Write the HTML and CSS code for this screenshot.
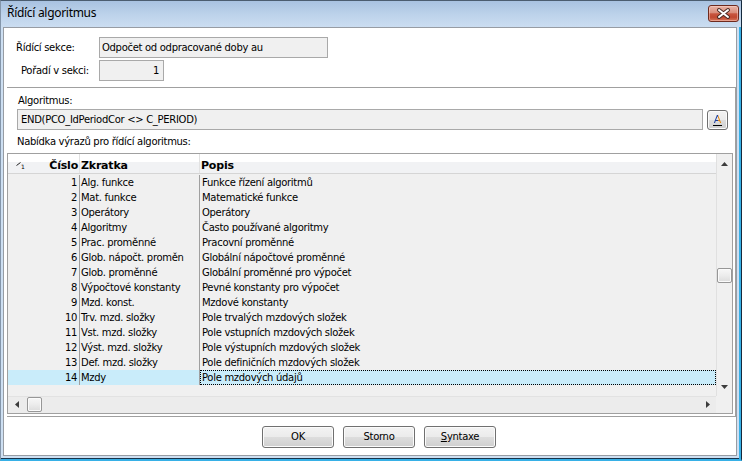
FILE: index.html
```html
<!DOCTYPE html>
<html lang="cs">
<head>
<meta charset="utf-8">
<title>Řídící algoritmus</title>
<link rel="stylesheet" href="styles.css">
</head>
<body>
<div class="window">
  <div class="titlebar">
    <span class="title">Řídící algoritmus</span>
    <button class="close" aria-label="Zavřít">
      <svg width="29" height="15" viewBox="0 0 29 15">
        <path d="M10 4 L19 11 M19 4 L10 11" stroke="#4a2a24" stroke-width="4" stroke-linecap="round" fill="none"/>
        <path d="M10 4 L19 11 M19 4 L10 11" stroke="#ffffff" stroke-width="2" stroke-linecap="round" fill="none"/>
      </svg>
    </button>
  </div>
  <div class="client">
    <div class="form-top">
      <div class="frow r1"><span class="lbl">Řídící sekce:</span><div class="field f-sekce">Odpočet od odpracované doby au</div></div>
      <div class="frow r2"><span class="lbl">Pořadí v sekci:</span><div class="field f-poradi">1</div></div>
    </div>
    <div class="panel">
      <div class="cap cap-alg">Algoritmus:</div>
      <div class="alg-row">
        <div class="field f-alg">END(PCO_IdPeriodCor &lt;&gt; C_PERIOD)</div>
        <button class="abtn"><span class="a-glyph">A</span></button>
      </div>
      <div class="cap cap-nab">Nabídka výrazů pro řídící algoritmus:</div>
      <div class="grid">
        <div class="gmain">
          <div class="ghead">
            <div class="hc h1"><span class="sort"><svg width="5" height="4" viewBox="0 0 5 4"><path d="M0.5 3.5 L4.5 0.5" stroke="#222" stroke-width="1" fill="none"/></svg><span class="sort-n">1</span></span><span class="htxt">Číslo</span></div>
            <div class="hc h2">Zkratka</div>
            <div class="hc h3">Popis</div>
          </div>
          <div class="gbody">
            <div class="row"><div class="c c1">1</div><div class="c c2">Alg. funkce</div><div class="c c3">Funkce řízení algoritmů</div></div>
            <div class="row"><div class="c c1">2</div><div class="c c2">Mat. funkce</div><div class="c c3">Matematické funkce</div></div>
            <div class="row"><div class="c c1">3</div><div class="c c2">Operátory</div><div class="c c3">Operátory</div></div>
            <div class="row"><div class="c c1">4</div><div class="c c2">Algoritmy</div><div class="c c3">Často používané algoritmy</div></div>
            <div class="row"><div class="c c1">5</div><div class="c c2">Prac. proměnné</div><div class="c c3">Pracovní proměnné</div></div>
            <div class="row"><div class="c c1">6</div><div class="c c2">Glob. nápočt. proměn</div><div class="c c3">Globální nápočtové proměnné</div></div>
            <div class="row"><div class="c c1">7</div><div class="c c2">Glob. proměnné</div><div class="c c3">Globální proměnné pro výpočet</div></div>
            <div class="row"><div class="c c1">8</div><div class="c c2">Výpočtové konstanty</div><div class="c c3">Pevné konstanty pro výpočet</div></div>
            <div class="row"><div class="c c1">9</div><div class="c c2">Mzd. konst.</div><div class="c c3">Mzdové konstanty</div></div>
            <div class="row"><div class="c c1">10</div><div class="c c2">Trv. mzd. složky</div><div class="c c3">Pole trvalých mzdových složek</div></div>
            <div class="row"><div class="c c1">11</div><div class="c c2">Vst. mzd. složky</div><div class="c c3">Pole vstupních mzdových složek</div></div>
            <div class="row"><div class="c c1">12</div><div class="c c2">Výst. mzd. složky</div><div class="c c3">Pole výstupních mzdových složek</div></div>
            <div class="row"><div class="c c1">13</div><div class="c c2">Def. mzd. složky</div><div class="c c3">Pole definičních mzdových složek</div></div>
            <div class="row sel"><div class="c c1">14</div><div class="c c2">Mzdy</div><div class="c c3">Pole mzdových údajů</div></div>
          </div>
        </div>
        <div class="vscroll">
          <div class="arr arr-up"><svg width="7" height="4" viewBox="0 0 7 4"><polygon points="0,4 3.5,0 7,4" fill="#3c3c3c"/></svg></div>
          <div class="thumb vthumb"></div>
          <div class="arr arr-down"><svg width="7" height="4" viewBox="0 0 7 4"><polygon points="0,0 7,0 3.5,4" fill="#3c3c3c"/></svg></div>
        </div>
        <div class="hscroll">
          <div class="harr harr-l"><svg width="4" height="7" viewBox="0 0 4 7"><polygon points="4,0 4,7 0,3.5" fill="#3c3c3c"/></svg></div>
          <div class="thumb hthumb"></div>
          <div class="harr harr-r"><svg width="4" height="7" viewBox="0 0 4 7"><polygon points="0,0 4,3.5 0,7" fill="#3c3c3c"/></svg></div>
        </div>
        <div class="corner"></div>
      </div>
    </div>
    <div class="buttons">
      <button class="btn">OK</button>
      <button class="btn">Storno</button>
      <button class="btn"><span class="u">S</span>yntaxe</button>
    </div>
  </div>
</div>
</body>
</html>
```
FILE: styles.css
```css
* { box-sizing: border-box; }
html, body { margin: 0; padding: 0; }
body {
  width: 742px;
  height: 461px;
  overflow: hidden;
  background: #ffffff;
  font-family: "DejaVu Sans", "Liberation Sans", sans-serif;
  font-size: 10px;
  letter-spacing: -0.3px;
  color: #000;
}
button { font: inherit; letter-spacing: inherit; color: inherit; padding: 0; margin: 0; }

.window {
  width: 742px;
  height: 461px;
  display: flex;
  flex-direction: column;
  background: #cddff2;
  border-top: 1px solid #4b5d70;
  border-left: 1px solid #8496aa;
  border-right: 1px solid #15293c;
  border-bottom: 2px solid #37b0e6;
  box-shadow: inset -2px 0 0 #37b0e6, inset 0 -1px 0 #18334c;
}

.titlebar {
  height: 26px;
  flex: 0 0 26px;
  display: flex;
  align-items: flex-start;
  background: linear-gradient(180deg, #a8c2e1 0%, #bcd2ea 50%, #cbddf1 100%);
}
.title {
  font-family: "Noto Sans", "Liberation Sans", sans-serif;
  font-size: 12px;
  letter-spacing: -0.3px;
  line-height: 24px;
  padding-left: 6px;
  color: #000;
}
.close {
  margin-left: auto;
  margin-top: 4px;
  margin-right: 2px;
  width: 31px;
  height: 17px;
  border: 1px solid #6e2a1e;
  border-radius: 3px;
  background: linear-gradient(180deg, #e9b4a6 0%, #d98d7b 45%, #c8553f 52%, #c04830 75%, #d8765b 100%);
  box-shadow: inset 0 0 0 1px rgba(255, 220, 210, 0.45);
  display: flex;
  align-items: center;
  justify-content: center;
}
.close svg { display: block; }

.client {
  flex: 1;
  margin: 0 4px 3px 2px;
  background: #fff;
  border: 1px solid #979ca3;
  display: flex;
  flex-direction: column;
}

.form-top { padding-top: 9px; }
.frow { display: flex; align-items: center; height: 21px; }
.frow.r2 { margin-top: 2px; }
.lbl { flex: 0 0 95px; line-height: 21px; }
.r1 .lbl { padding-left: 12px; }
.r2 .lbl { padding-left: 17px; }

.field {
  height: 21px;
  line-height: 19px;
  background: #f0f0f0;
  border: 1px solid #a9a9a9;
  white-space: nowrap;
  overflow: hidden;
}
.f-sekce { width: 229px; padding-left: 2px; }
.f-poradi { width: 65px; text-align: right; padding-right: 4px; }

.panel {
  margin-top: 6px;
  margin-left: 3px;
  border-top: 1px solid #a0a0a0;
  border-right: 1px solid #a0a0a0;
  border-bottom: 1px solid #a0a0a0;
  padding-bottom: 2px;
}
.cap { line-height: 14px; padding-left: 10px; }
.cap-alg { margin-top: 6px; padding-left: 11px; }
.cap-nab { margin-top: 5px; }

.alg-row { display: flex; align-items: flex-start; margin-top: 1px; padding-left: 10px; }
.f-alg { width: 686px; padding-left: 3px; }
.abtn {
  margin-left: 4px;
  margin-top: 1px;
  width: 21px;
  height: 20px;
  border: 1px solid #707070;
  border-radius: 3px;
  background: linear-gradient(180deg, #f3f3f3 0%, #ebebeb 50%, #dddddd 51%, #cfcfcf 100%);
  box-shadow: inset 0 0 0 1px #fbfbfb;
  display: flex;
  align-items: center;
  justify-content: center;
}
.a-glyph {
  font-family: "DejaVu Sans", sans-serif;
  font-size: 11px;
  line-height: 10px;
  letter-spacing: 0;
  padding: 0 1px;
  border-bottom: 1px solid #000;
  color: #1d3f9f;
  background: linear-gradient(90deg, #1d3f9f 0%, #1d3f9f 55%, #e3860d 56%, #e3860d 100%);
  -webkit-background-clip: text;
  background-clip: text;
  -webkit-text-fill-color: transparent;
}

.grid {
  margin-top: 4px;
  margin-right: 2px;
  height: 261px;
  border: 1px solid #a0a0a0;
  display: grid;
  grid-template-columns: 708px 16px;
  grid-template-rows: 242px 17px;
  background: #f0f0f0;
}
.gmain { display: flex; flex-direction: column; overflow: hidden; }
.ghead {
  height: 20px;
  flex: 0 0 20px;
  display: grid;
  grid-template-columns: 72px 120px 1fr;
  border-bottom: 1px solid #d5d5d5;
  background: linear-gradient(180deg, #ffffff 0%, #ffffff 42%, #f1f2f4 43%, #f1f2f4 100%);
  font-weight: bold;
  font-size: 11px;
  letter-spacing: -0.2px;
}
.hc { line-height: 14px; padding-top: 5px; white-space: nowrap; overflow: hidden; }
.h1 {
  display: flex;
  justify-content: space-between;
  align-items: flex-start;
  border-right: 1px solid #e2e2e2;
  padding-right: 1px;
}
.h2 { border-right: 1px solid #e2e2e2; padding-left: 1px; }
.h3 { padding-left: 1px; }
.sort { display: flex; align-items: flex-start; margin-left: 8px; margin-top: 3px; font-weight: normal; }
.sort svg { display: block; }
.sort-n { font-size: 6px; line-height: 6px; margin-top: 2px; letter-spacing: 0; }

.gbody { padding-top: 1px; }
.row {
  display: grid;
  grid-template-columns: 72px 120px 1fr;
  height: 15px;
}
.c { line-height: 15px; white-space: nowrap; overflow: hidden; }
.c1 { text-align: right; padding-right: 2px; border-right: 1px solid #a0a0a0; }
.c2 { padding-left: 1px; border-right: 1px solid #a0a0a0; }
.c3 { padding-left: 1px; border: 1px solid transparent; line-height: 13px; }
.row.sel { background: #c9ecfa; }
.row.sel .c3 { border: 1px dotted #000; }

.vscroll {
  border-left: 1px solid #e0e0e0;
  background: #f0f0f0;
  display: flex;
  flex-direction: column;
  align-items: stretch;
}
.arr { display: flex; align-items: center; justify-content: center; }
.arr svg { display: block; }
.arr-up { height: 20px; flex: 0 0 20px; }
.arr-down { height: 18px; flex: 0 0 18px; margin-top: auto; }
.thumb {
  border: 1px solid #979797;
  border-radius: 2px;
  background: linear-gradient(180deg, #f7f7f7 0%, #ececec 50%, #dcdcdc 100%);
  box-shadow: inset 0 0 0 1px #fbfbfb;
}
.vthumb { width: 15px; height: 15px; margin-top: 94px; }

.hscroll {
  border-top: 1px solid #e2e2e2;
  background: #ececec;
  display: flex;
  align-items: flex-start;
}
.harr { height: 15px; display: flex; align-items: center; justify-content: center; }
.harr svg { display: block; }
.harr-l { width: 19px; padding-right: 2px; }
.hthumb { width: 15px; height: 15px; }
.harr-r { width: 17px; margin-left: auto; }
.corner { background: #f0f0f0; }

.buttons {
  display: flex;
  gap: 9px;
  margin-top: 9px;
  padding-left: 258px;
}
.btn {
  width: 72px;
  height: 22px;
  border: 1px solid #707070;
  border-radius: 3px;
  background: linear-gradient(180deg, #f3f3f3 0%, #ebebeb 50%, #dddddd 51%, #cfcfcf 100%);
  box-shadow: inset 0 0 0 1px #fbfbfb;
  line-height: 20px;
  text-align: center;
}
.u { text-decoration: underline; }
```
